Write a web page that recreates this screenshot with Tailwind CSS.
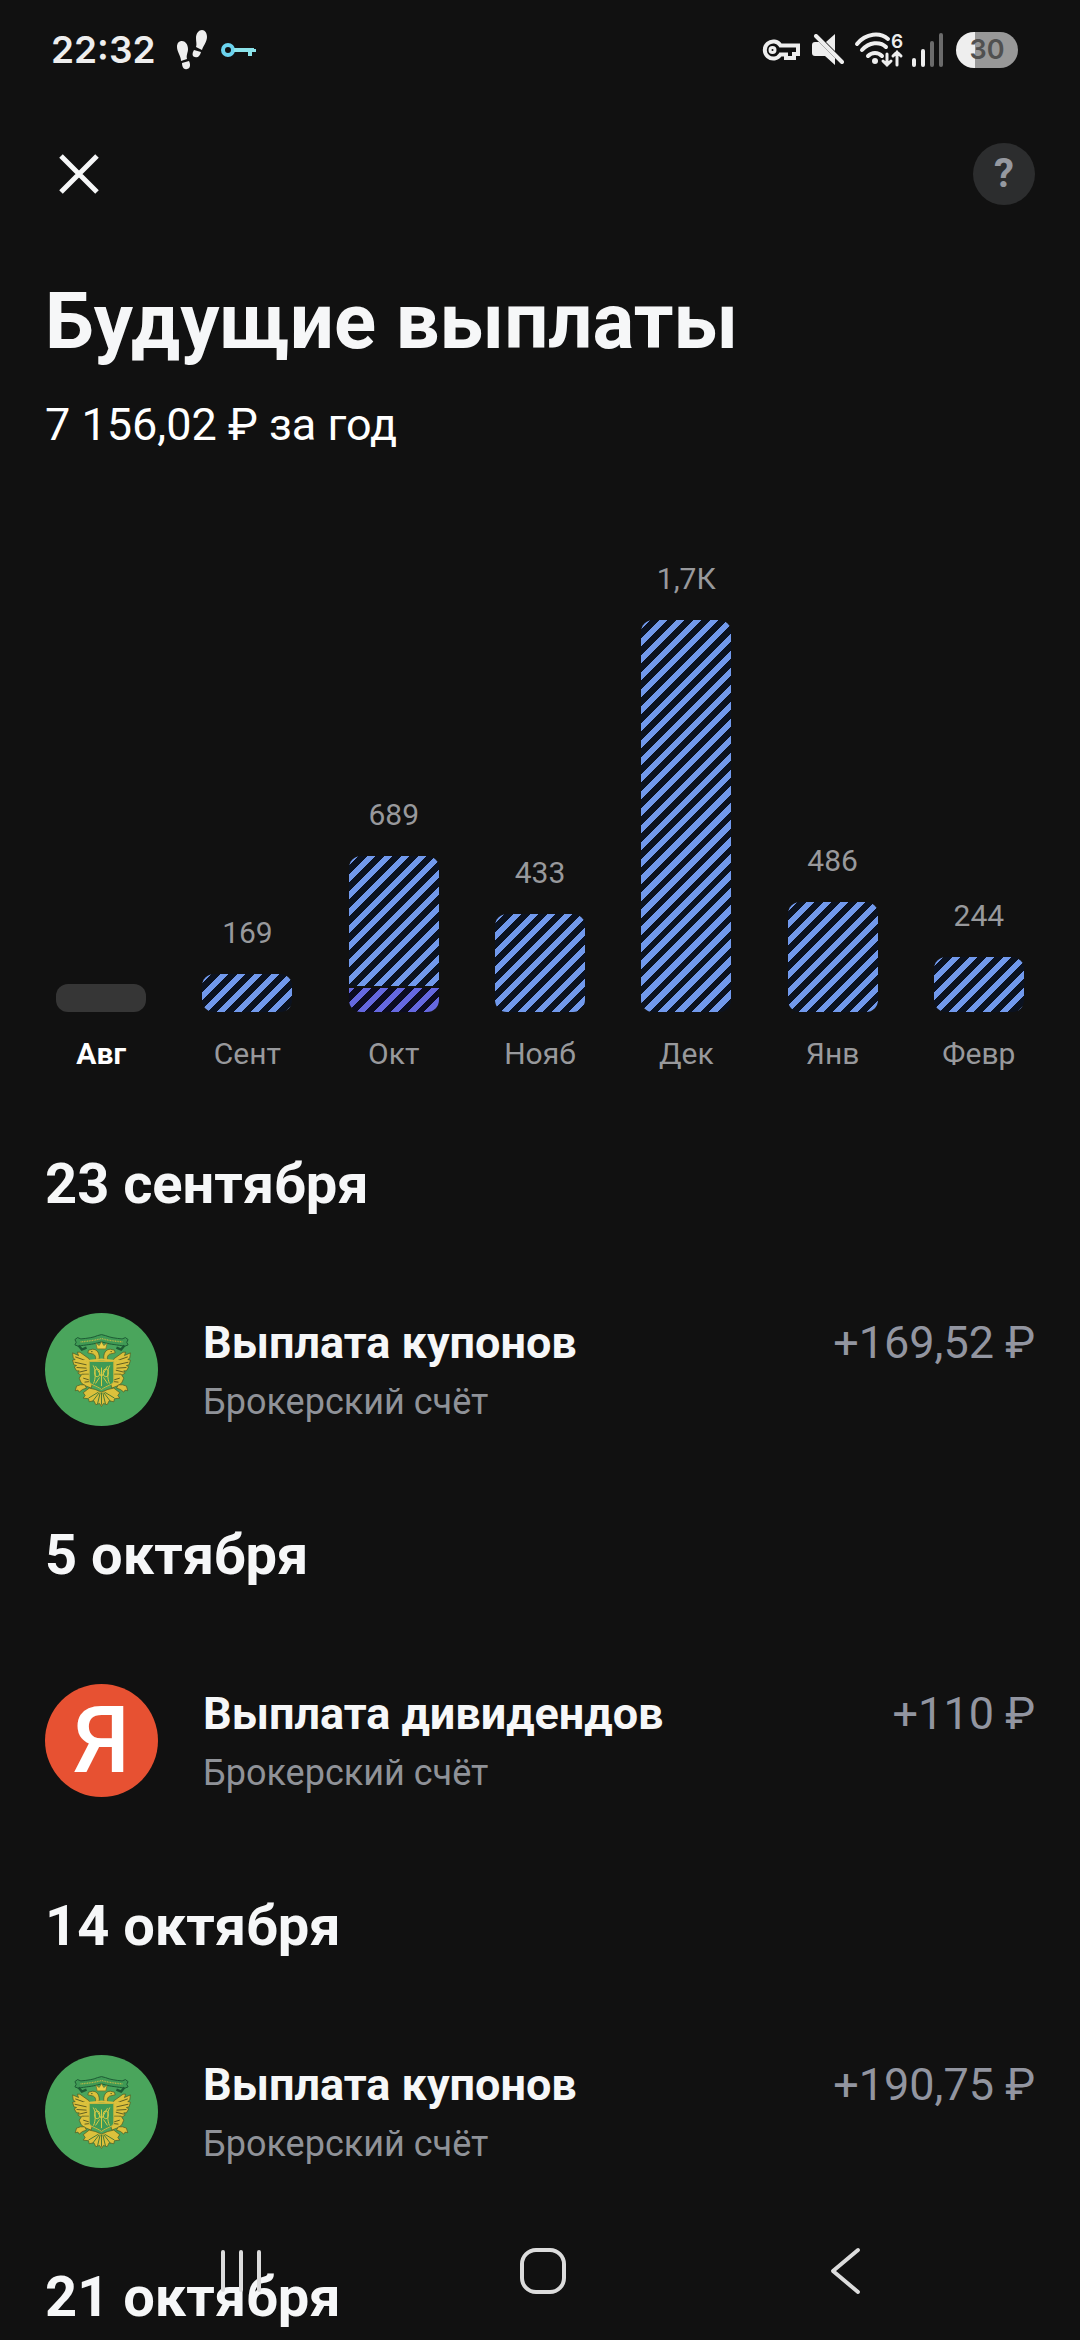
<!DOCTYPE html>
<html lang="ru">
<head>
    <meta charset="UTF-8">
    <meta name="viewport" content="width=device-width, initial-scale=1.0">
    <title>Будущие выплаты</title>
    <script src="https://cdn.jsdelivr.net/npm/@tailwindcss/browser@4"></script>
    <style>
        .stripes-blue {
            background: repeating-linear-gradient(135deg, #0b1220 0 1px, #7199ec 1px 7px, #0b1220 7px 12px);
        }
        .stripes-violet {
            background: repeating-linear-gradient(135deg, #6568e0 0 4px, #0c0b20 4px 10px, #6568e0 10px 12px);
        }
    </style>
</head>
<body class="bg-[#111111] text-[#f6f7f8] min-h-screen font-['Roboto',sans-serif] overflow-x-hidden">
    <!-- Shared emblem -->
    <svg class="hidden" aria-hidden="true">
        <symbol id="emblem" viewBox="45 68 340 340">
            <circle cx="215" cy="238" r="170" fill="#4aa55c"/>
            <!-- ribbon -->
            <path d="M135 148l8-6 10 4c20-2 38-4 50-10l12-3 12 3c14 6 30 8 50 10l10-4 8 6-4 8 4 8-10 4c-20-4-46-6-58-10l-12-3-12 3c-12 4-38 6-58 10l-10-4 4-8z" fill="#3f9a55" stroke="#1d5b34" stroke-width="3"/>
            <path d="M152 155c20-2 40-4 63-10 23 6 43 8 63 10" fill="none" stroke="#b9b846" stroke-width="4" stroke-dasharray="3 2"/>
            <path d="M146 166l10 12 14-6M284 166l-10 12-14-6" fill="none" stroke="#1d5b34" stroke-width="7"/>
            <!-- wings -->
            <g fill="#dcc13c" stroke="#4c5420" stroke-width="2">
                <path d="M178 206l-28-20-8 0 4 10-18-8 2 16 6 4-8 2 4 14 8 2-7 4 7 12 8 0-4 7 10 6 8-2-3 9 14 0 13-12z"/>
                <path d="M252 206l28-20 8 0-4 10 18-8-2 16-6 4 8 2-4 14-8 2 7 4-7 12-8 0 4 7-10 6-8-2 3 9-14 0-13-12z"/>
                <path d="M156 252l-8 12 6 14 10 8 20 8 4-16-10-26z"/>
                <path d="M274 252l8 12-6 14-10 8-20 8-4-16 10-26z"/>
                <path d="M152 284l-12 4-4 14 8-2 4 6 10-8 12-4-6-10zM278 284l12 4 4 14-8-2-4 6-10-8-12-4 6-10z"/>
            </g>
            <path d="M136 200l34 12M134 216l36 8M140 232l30 2M148 246l24-6M294 200l-34 12M296 216l-36 8M290 232l-30 2M282 246l-24-6M160 264l20 6M164 276l18-2M270 264l-20 6M266 276l-18-2" fill="none" stroke="#5f5e22" stroke-width="3"/>
            <!-- tail -->
            <path d="M178 294l-18 14 6 8-6 8 16 2 2 9 14-3 6 12 11-4 6 9 6-9 11 4 6-12 14 3 2-9 16-2-6-8 6-8-18-14-18 4-19 8-19-8z" fill="#dcc13c" stroke="#4c5420" stroke-width="2"/>
            <path d="M206 306l-30 18M208 308l-20 26M211 308l-8 34M215 308v36M219 308l8 34M222 308l20 26M224 306l30 18" fill="none" stroke="#4a7a35" stroke-width="3"/>
            <!-- heads and crown -->
            <path d="M196 208c4-8-2-16-8-17l-14-3 2-8 12-3c14 0 22 12 20 30zM234 208c-4-8 2-16 8-17l14-3-2-8-12-3c-14 0-22 12-20 30z" fill="#dcc13c" stroke="#4c5420" stroke-width="2"/>
            <path d="M202 176l-4-18 10 8 7-12 7 12 10-8-4 18z" fill="#e8d048" stroke="#6d6a24" stroke-width="2"/>
            <circle cx="186" cy="184" r="2" fill="#2c4a20"/>
            <circle cx="244" cy="184" r="2" fill="#2c4a20"/>
            <path d="M160 212h20l35-4 35 4h20" fill="none" stroke="#dcc13c" stroke-width="6"/>
            <!-- shield -->
            <path d="M178 214h74v58c0 12-22 14-37 26-15-12-37-14-37-26z" fill="#3f9a55" stroke="#cdb83c" stroke-width="3"/>
            <g fill="none" stroke="#d8cb45" stroke-width="3">
                <path d="M190 226c8 12 8 40 1 54M240 226c-8 12-8 40-1 54M197 228l18 32 18-32M197 280l12-18M233 280l-12-18M215 232v56"/>
                <ellipse cx="202" cy="248" rx="8" ry="12"/>
                <ellipse cx="228" cy="248" rx="8" ry="12"/>
            </g>
        </symbol>
    </svg>

    <!-- Status bar -->
    <div class="h-[100px] pl-[51px] pr-[62px] flex items-center justify-between text-[#eeeeee]">
        <div class="flex items-center">
            <span class="font-['Inter',sans-serif] font-semibold text-[37px] leading-[48px]">22:32</span>
            <svg class="ml-5 w-8 h-10" viewBox="0 0 32 40" fill="currentColor">
                <path d="M1 17c0-4 2-6 5-6s6 3 6 8c0 4-2 6-1 10l-6 2C5 26 1 22 1 17z"/>
                <path d="M6 33l7-2c2 4 1 8-2 8-3 1-5-2-5-6z"/>
                <path d="M31 7c0-4-2-7-5-7s-6 3-6 8c0 4 1 6 0 9l6 3c1-4 5-8 5-13z"/>
                <path d="M18 20l7 2c-1 4-3 6-6 5-3 0-3-4-1-7z"/>
            </svg>
            <svg class="ml-3 w-9 h-4" viewBox="0 0 36 16" fill="none">
                <circle cx="8" cy="8" r="5" stroke="#6bd3ee" stroke-width="4"/>
                <path d="M14 8h20M30 8v6M34 7v3" stroke="#8be3ea" stroke-width="4"/>
            </svg>
        </div>
        <div class="flex items-center">
            <svg class="w-[38px] h-[22px]" viewBox="0 0 38 22" fill="none" stroke="currentColor" stroke-width="4">
                <path d="M18.500 6.500A8.500 8.500 0 1 0 18.500 15.500H24V19H32V15H36V6.500Z"/>
                <circle cx="10.500" cy="11" r="2.500" stroke-width="3"/>
            </svg>
            <svg class="ml-3 w-8 h-8" viewBox="0 0 32 32" fill="currentColor">
                <path d="M0 11q0-3 3-3h4l16 16v7l-10-9H3q-3 0-3-3zM14 8l9-8v17z"/>
                <path d="M4 2l26 26" stroke="currentColor" stroke-width="4" stroke-linecap="round"/>
            </svg>
            <svg class="ml-[10px] w-[54px] h-11" viewBox="0 -4 54 44" fill="none" stroke="currentColor" stroke-width="4" stroke-linecap="round">
                <path d="M3 12C12 1 26 0 34 7M8 18c7-8 18-9 24-3M14 24c4-4 10-4 14 0"/>
                <circle cx="21" cy="29" r="3" fill="currentColor" stroke="none"/>
                <path d="M33 22v11M29 29l4 4 4-4M43 33V20M39 24l4-4 4 4" stroke-width="3"/>
                <text x="37" y="16" fill="currentColor" stroke="none" font-family="Inter, sans-serif" font-size="19" font-weight="600">6</text>
            </svg>
            <svg class="ml-1 w-8 h-[34px]" viewBox="0 0 32 34" fill="currentColor">
                <rect x="0" y="25" width="4" height="9" rx="2"/>
                <rect x="9" y="16" width="4" height="18" rx="2"/>
                <rect x="18" y="8" width="4" height="26" rx="2" fill="#6b6b6b"/>
                <rect x="27" y="0" width="4" height="34" rx="2" fill="#6b6b6b"/>
            </svg>
            <div class="ml-3 w-[62px] h-9 rounded-full bg-[linear-gradient(90deg,#eeeeee_30%,#989898_30%)] flex items-center justify-center font-['Inter',sans-serif] font-semibold text-[27px] leading-9 text-[#505050]">30</div>
        </div>
    </div>

    <!-- Header -->
    <header class="h-[148px] px-[45px] flex items-center justify-between">
        <button class="w-[68px] h-[68px] flex items-center justify-center" aria-label="Закрыть">
            <svg class="w-10 h-10" viewBox="0 0 40 40" fill="none" stroke="#f6f7f8" stroke-width="5">
                <path d="M2 2l36 36M38 2L2 38"/>
            </svg>
        </button>
        <button class="w-[62px] h-[62px] rounded-full bg-[#2c2d2e] text-[#9699a0] text-[40px] leading-[62px] font-bold text-center" aria-label="Помощь">?</button>
    </header>

    <main>
        <div class="px-[45px] pt-[26px]">
            <h1 class="text-[78px] leading-[96px] font-bold">Будущие выплаты</h1>
            <p class="mt-[25px] text-[45px] leading-[60px] text-white">7 156,02 ₽ за год</p>
        </div>

        <!-- Payments by month -->
        <div class="mt-[104px] px-7 grid grid-cols-7 items-end text-center text-[30px] leading-10 text-[#98999c]">
            <div class="flex flex-col items-center">
                <div class="w-[90px] rounded-xl bg-[#363636]" style="height: 28px"></div>
                <span class="mt-5 leading-[44px] font-bold text-white">Авг</span>
            </div>
            <div class="flex flex-col items-center">
                <span class="mb-[21px]">169</span>
                <div class="w-[90px] rounded-xl stripes-blue" style="height: 38px"></div>
                <span class="mt-5 leading-[44px]">Сент</span>
            </div>
            <div class="flex flex-col items-center">
                <span class="mb-[21px]">689</span>
                <div class="w-[90px] rounded-xl overflow-hidden flex flex-col gap-[2px]">
                    <div class="stripes-blue" style="height: 130px"></div>
                    <div class="stripes-violet" style="height: 24px"></div>
                </div>
                <span class="mt-5 leading-[44px]">Окт</span>
            </div>
            <div class="flex flex-col items-center">
                <span class="mb-[21px]">433</span>
                <div class="w-[90px] rounded-xl stripes-blue" style="height: 98px"></div>
                <span class="mt-5 leading-[44px]">Нояб</span>
            </div>
            <div class="flex flex-col items-center">
                <span class="mb-[21px]">1,7К</span>
                <div class="w-[90px] rounded-xl stripes-blue" style="height: 392px"></div>
                <span class="mt-5 leading-[44px]">Дек</span>
            </div>
            <div class="flex flex-col items-center">
                <span class="mb-[21px]">486</span>
                <div class="w-[90px] rounded-xl stripes-blue" style="height: 110px"></div>
                <span class="mt-5 leading-[44px]">Янв</span>
            </div>
            <div class="flex flex-col items-center">
                <span class="mb-[21px]">244</span>
                <div class="w-[90px] rounded-xl stripes-blue" style="height: 55px"></div>
                <span class="mt-5 leading-[44px]">Февр</span>
            </div>
        </div>

        <!-- Payments list -->
        <div class="mt-[74px] px-[45px] flex flex-col gap-[95px]">
            <section class="flex flex-col gap-[95px]">
                <h2 class="text-[56px] leading-[68px] font-bold">23 сентября</h2>
                <div class="flex items-start gap-[45px]">
                    <svg class="w-[113px] h-[113px] shrink-0" aria-hidden="true"><use href="#emblem"/></svg>
                    <div class="flex-1">
                        <h3 class="text-[45px] leading-[60px] font-bold">Выплата купонов</h3>
                        <p class="mt-[5px] text-[36px] leading-[48px] text-[#8f9298]">Брокерский счёт</p>
                    </div>
                    <span class="text-[45px] leading-[60px] text-[#9295a0]">+169,52 ₽</span>
                </div>
            </section>

            <section class="flex flex-col gap-[95px]">
                <h2 class="text-[56px] leading-[68px] font-bold">5 октября</h2>
                <div class="flex items-start gap-[45px]">
                    <div class="w-[113px] h-[113px] shrink-0 rounded-full bg-[#e75132] flex items-center justify-center font-medium text-[92px] leading-[113px] text-white">Я</div>
                    <div class="flex-1">
                        <h3 class="text-[45px] leading-[60px] font-bold">Выплата дивидендов</h3>
                        <p class="mt-[5px] text-[36px] leading-[48px] text-[#8f9298]">Брокерский счёт</p>
                    </div>
                    <span class="text-[45px] leading-[60px] text-[#9295a0]">+110 ₽</span>
                </div>
            </section>

            <section class="flex flex-col gap-[95px]">
                <h2 class="text-[56px] leading-[68px] font-bold">14 октября</h2>
                <div class="flex items-start gap-[45px]">
                    <svg class="w-[113px] h-[113px] shrink-0" aria-hidden="true"><use href="#emblem"/></svg>
                    <div class="flex-1">
                        <h3 class="text-[45px] leading-[60px] font-bold">Выплата купонов</h3>
                        <p class="mt-[5px] text-[36px] leading-[48px] text-[#8f9298]">Брокерский счёт</p>
                    </div>
                    <span class="text-[45px] leading-[60px] text-[#9295a0]">+190,75 ₽</span>
                </div>
            </section>

            <section>
                <h2 class="text-[56px] leading-[68px] font-bold">21 октября</h2>
            </section>
        </div>
    </main>

    <!-- System navigation over the content -->
    <nav class="fixed inset-x-0 bottom-0 h-[138px] pl-[90px] pr-[84px] grid grid-cols-3 items-center justify-items-center text-[#dcdcdc]">
        <button aria-label="Недавние">
            <svg class="w-12 h-12" viewBox="0 0 48 48" fill="none" stroke="currentColor" stroke-width="4" stroke-linecap="round">
                <path d="M6 5v38M24 5v38M42 5v38"/>
            </svg>
        </button>
        <button aria-label="Домой">
            <svg class="w-12 h-12" viewBox="0 0 48 48" fill="none" stroke="currentColor" stroke-width="4">
                <rect x="3" y="3" width="42" height="42" rx="14"/>
            </svg>
        </button>
        <button aria-label="Назад">
            <svg class="w-12 h-12" viewBox="0 0 48 48" fill="none" stroke="currentColor" stroke-width="4" stroke-linecap="round" stroke-linejoin="round">
                <path d="M37 3L12 24l25 21"/>
            </svg>
        </button>
    </nav>
</body>
</html>
